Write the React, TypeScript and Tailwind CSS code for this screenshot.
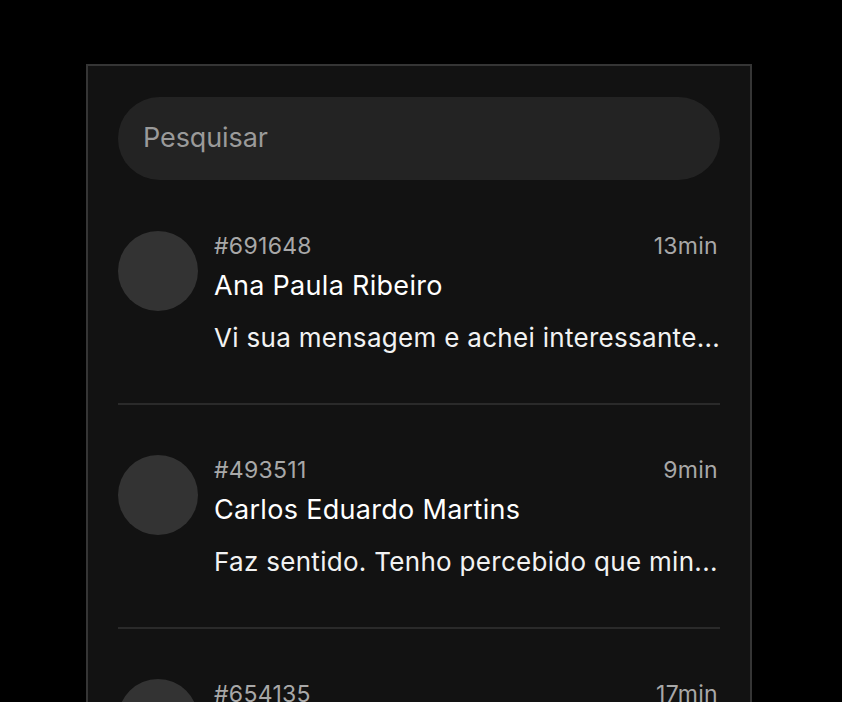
import React from "react";

const items = [
  { id: "#691648", time: "13min", name: "Ana Paula Ribeiro", msg: "Vi sua mensagem e achei interessante..." },
  { id: "#493511", time: "9min", name: "Carlos Eduardo Martins", msg: "Faz sentido. Tenho percebido que min..." },
  { id: "#654135", time: "17min", name: "Mariana Souza", msg: "Obrigada pelo retorno, vou pensar..." },
];

export default function App() {
  return (
    <div className="h-[702px] w-full bg-black overflow-hidden" style={{ fontFamily: "Inter, 'Liberation Sans', sans-serif" }}>
      <div className="pt-[64px] pl-[86px]">
        <div className="w-[666px] h-[638px] overflow-hidden border-2 border-b-0 border-[#353535] bg-[#121212] px-[30px] pt-[31px]">
          <div className="h-[83px] rounded-full bg-[#232323] flex items-center px-[25px]">
            <span className="text-[27px] text-[#9a9a9a] tracking-[-0.1px]">Pesquisar</span>
          </div>
          <div className="pt-[1px]">
            {items.map((it) => (
              <div key={it.id} className="flex gap-4 pt-[50px] pb-[47px] border-b-2 border-[#2a2a2a]">
                <div className="w-20 h-20 rounded-full bg-[#333333] shrink-0" />
                <div className="flex-1 min-w-0">
                  <div className="flex justify-between items-center text-[23px] text-[#a8a8a8] leading-[30px] tracking-[0.3px]">
                    <span>{it.id}</span>
                    <span className="pr-[2px]">{it.time}</span>
                  </div>
                  <div className="text-[27px] text-white leading-[36px] mt-[7px] tracking-[0.3px]">{it.name}</div>
                  <div className="text-[26px] text-[#f2f2f2] leading-[36px] mt-[16px] tracking-[0.3px] whitespace-nowrap">{it.msg}</div>
                </div>
              </div>
            ))}
          </div>
        </div>
      </div>
    </div>
  );
}
